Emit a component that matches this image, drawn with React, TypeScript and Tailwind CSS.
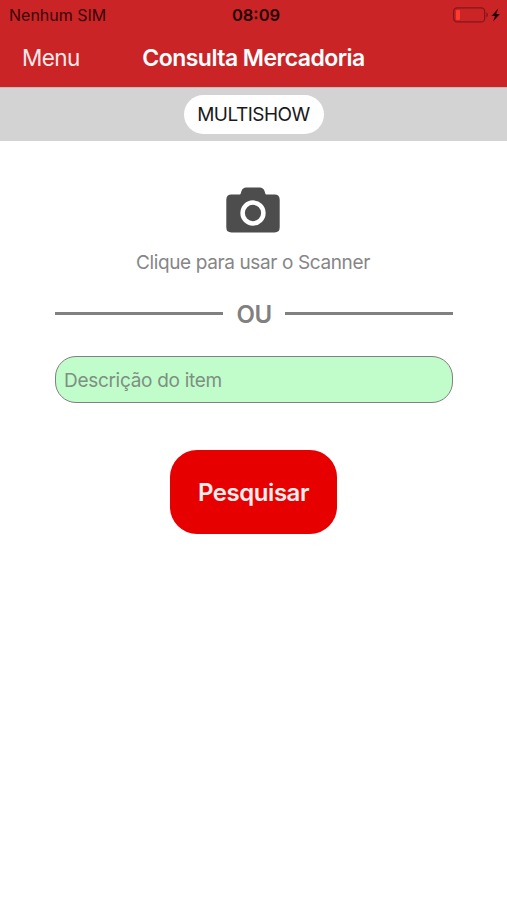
function StatusBar() {
  return (
    <div className="grid h-[30px] grid-cols-3 items-center pl-[9px] pr-[6px] text-[16px] leading-none text-[#3a0506]">
      <span className="whitespace-nowrap">Nenhum SIM</span>
      <span className="pl-[2px] text-center text-[16.5px] font-semibold text-[#1f0203]">
        08:09
      </span>
      <svg className="justify-self-end" width="49" height="18" viewBox="0 0 49 18">
        <rect
          x="1.7"
          y="1.9"
          width="31"
          height="14"
          rx="3.5"
          fill="none"
          stroke="#82171a"
          strokeWidth="1.3"
        />
        <rect x="4" y="4" width="4" height="10" rx="1.2" fill="#ff3b30" />
        <path d="M34.4 6.6c2 .6 2 4.2 0 4.8z" fill="#82171a" />
        <path d="M46.2 2.4l-6.7 7.5h3.5l-1.9 5.7 6.8-7.5h-3.7z" fill="#1f0203" />
      </svg>
    </div>
  );
}

function CameraIcon() {
  return (
    <svg width="54" height="46" viewBox="0 0 54 46">
      <path
        d="M5.5 7.5h8.2q.8 0 1.1-1.2l.7-2.3Q16.6 .5 20.3 .5h13.4Q37.4 .5 38.5 4l.7 2.3q.3 1.2 1.1 1.2h8.2q5.2 0 5.2 5.2v27.5q0 5.2-5.2 5.2h-43q-5.2 0-5.2-5.2V12.7q0-5.2 5.2-5.2z"
        fill="#4d4d4d"
      />
      <circle cx="27" cy="26" r="10.4" fill="none" stroke="#fff" strokeWidth="4.5" />
    </svg>
  );
}

export default function App() {
  return (
    <div className="flex h-[900px] w-[507px] flex-col bg-white font-['Inter','Liberation_Sans',sans-serif]">
      <header className="h-[87px] bg-[#ca2427]">
        <StatusBar />
        <nav className="grid h-[56px] grid-cols-[119px_1fr_119px] items-center text-[23px] text-white">
          <button className="pl-[22px] text-left text-[22.5px] tracking-[-0.6px] text-[#ffeaea]">
            Menu
          </button>
          <h1 className="text-center font-semibold tracking-[-0.54px] whitespace-nowrap">
            Consulta Mercadoria
          </h1>
        </nav>
      </header>

      <div className="flex h-[54px] justify-center border-t border-[#bdbdbd] bg-[#d3d3d3] pt-[7px]">
        <span className="flex h-[39px] w-[140px] items-center justify-center rounded-full bg-white pt-[1px] text-[19px] tracking-[-0.5px] text-[#1a1a1a]">
          MULTISHOW
        </span>
      </div>

      <main className="flex flex-col items-center pt-[46px] pr-[54px] pl-[55px]">
        <button className="mr-[2px] flex flex-col items-center">
          <CameraIcon />
          <span className="mt-[16px] h-[28px] text-[19px] leading-[28px] tracking-[-0.38px] text-[#868686]">
            Clique para usar o Scanner
          </span>
        </button>

        <div className="mt-[20px] flex h-[32px] w-full items-center justify-between">
          <div className="h-[3px] w-[168px] bg-[#808080]" />
          <span className="pt-[3px] text-[24px] font-semibold tracking-[-0.6px] text-[#808080]">
            OU
          </span>
          <div className="h-[3px] w-[168px] bg-[#808080]" />
        </div>

        <input
          className="mt-[27px] h-[47px] w-full rounded-[21px] border border-[#808080] bg-[#c0fdca] pt-[2px] pr-[8px] pl-[8px] text-[19px] tracking-[-0.3px] text-[#444] placeholder:text-[#7f8f82]"
          placeholder="Descrição do item"
        />

        <button className="mt-[47px] mr-[1px] h-[84px] w-[167px] rounded-[27px] bg-[#e60000] pt-[1px] text-[24px] font-semibold tracking-[-0.45px] text-[#ffecec]">
          Pesquisar
        </button>
      </main>
    </div>
  );
}
